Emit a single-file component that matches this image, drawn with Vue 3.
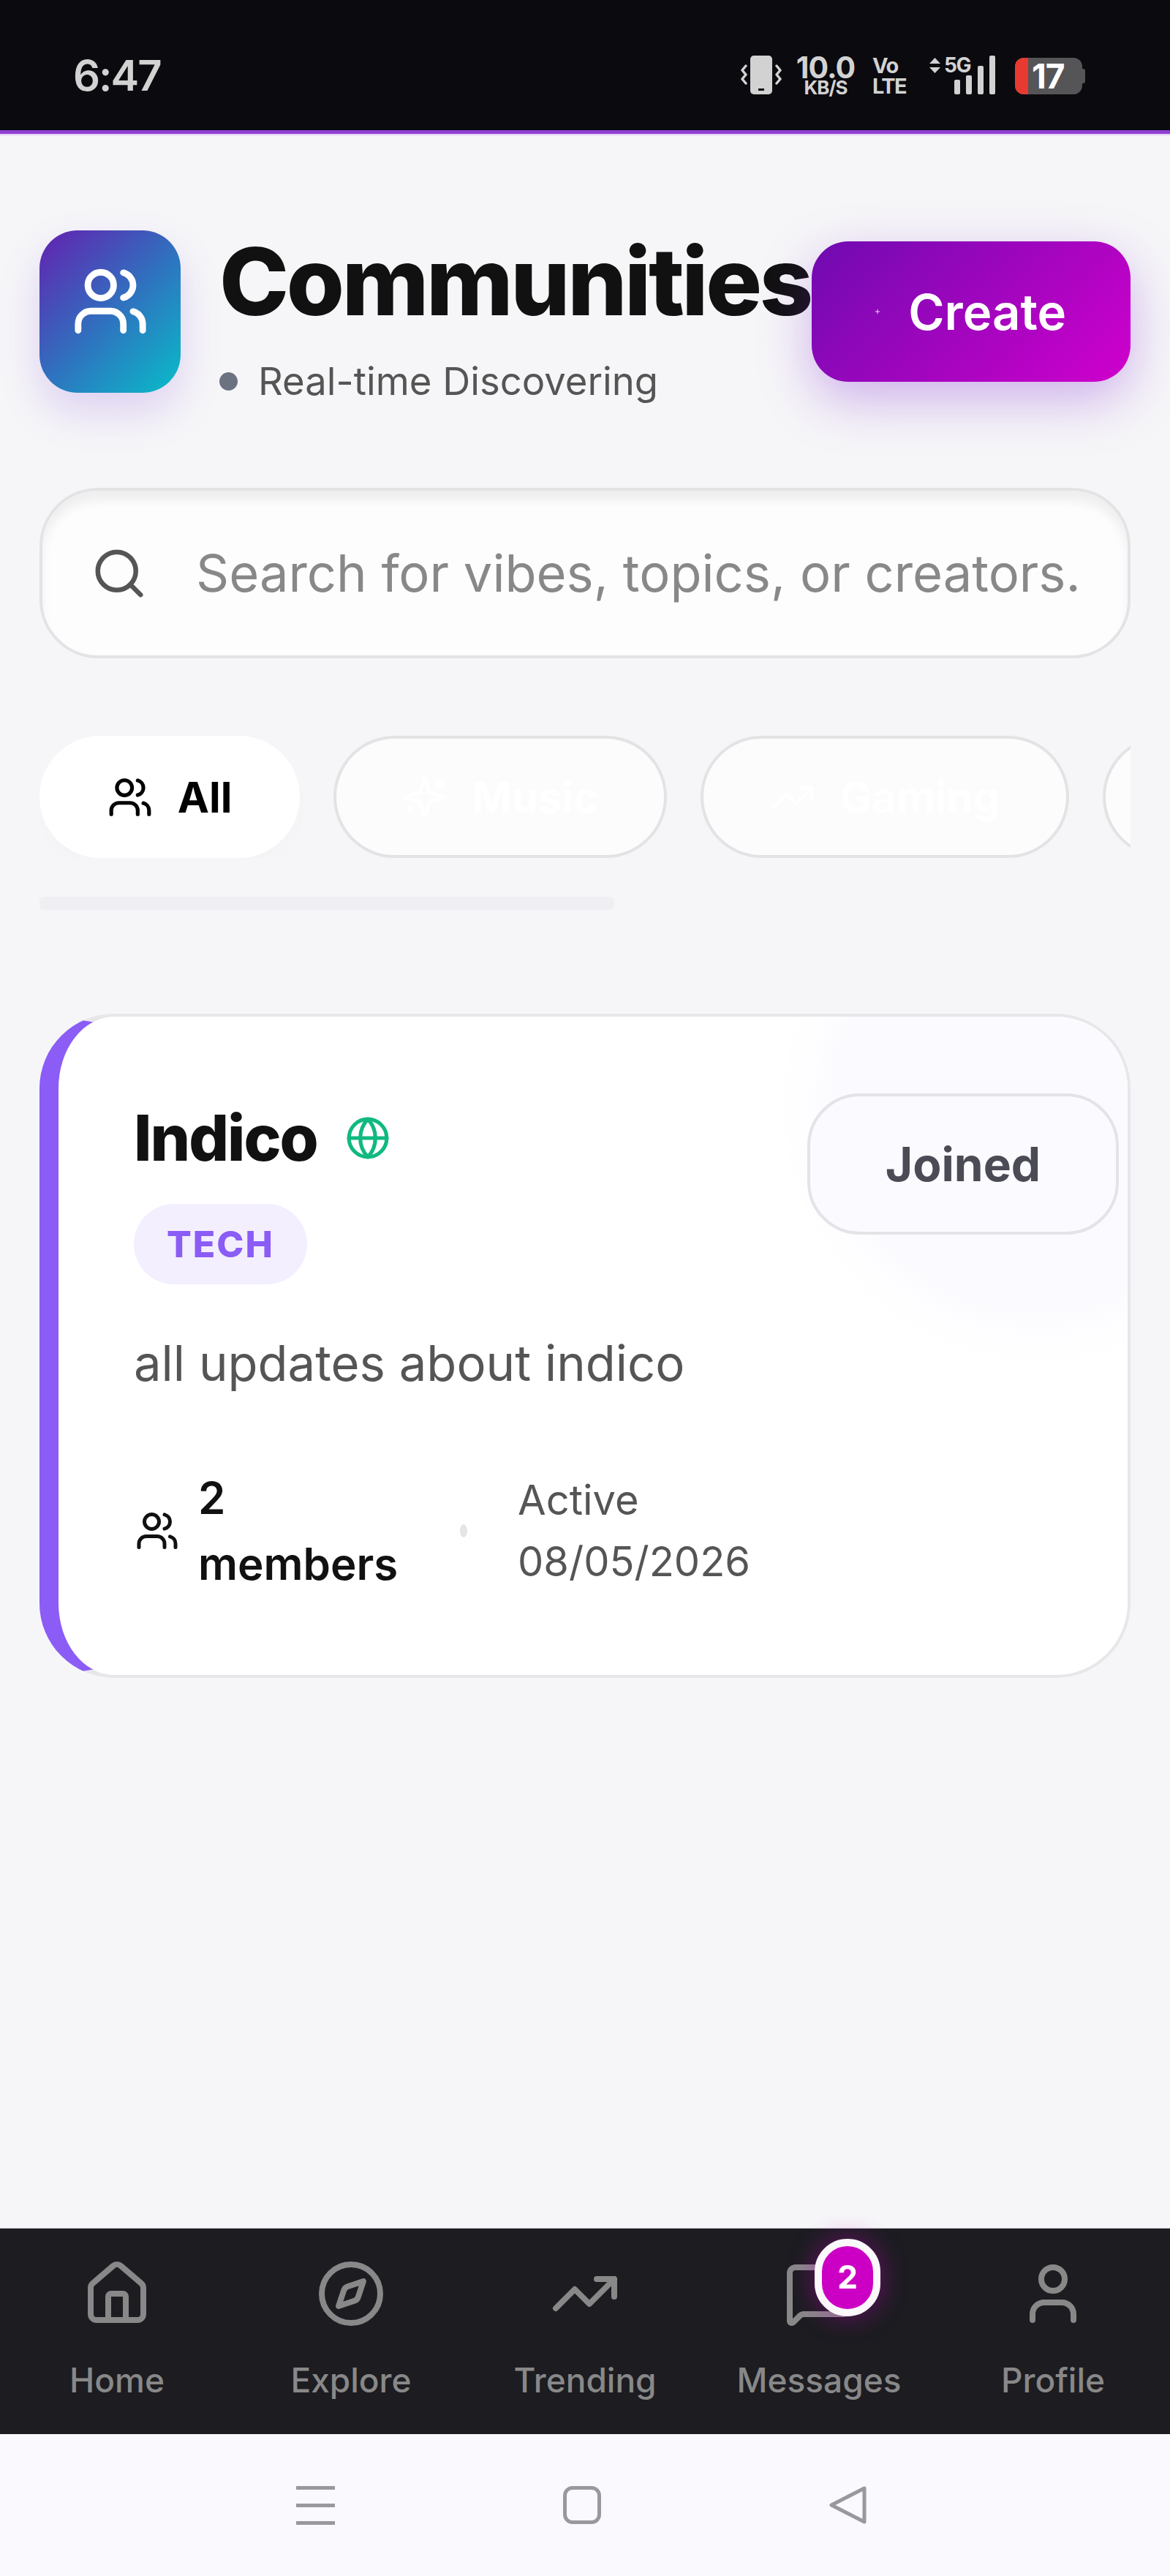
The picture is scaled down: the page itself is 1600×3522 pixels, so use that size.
<script setup>
const chips = [
  { label: "Music", icon: "music", width: 456 },
  { label: "Gaming", icon: "gaming", width: 504 }
]

const tabs = [
  { label: "Home", icon: "home" },
  { label: "Explore", icon: "compass" },
  { label: "Trending", icon: "trending" },
  { label: "Messages", icon: "messages", badge: 2 },
  { label: "Profile", icon: "user" }
]
</script>

<template>
  <div class="screen">
    <header class="status-bar">
      <span class="clock">6:47</span>

      <div class="status-icons">
        <svg class="vibrate" viewBox="0 0 56 54" fill="none">
          <rect x="13" y="0" width="30" height="53" rx="5" fill="#d2d2d2" />
          <rect x="24" y="45" width="8" height="3" fill="#0a0a0f" />
          <path d="M7 14 2 20l5 6-5 6 5 6M49 14l5 6-5 6 5 6-5 6" stroke="#d2d2d2" stroke-width="3.5" stroke-linecap="round" stroke-linejoin="round" />
        </svg>

        <div class="speed">
          <span class="speed-value">10.0</span>
          <span class="speed-unit">KB/S</span>
        </div>

        <div class="volte">
          <span>Vo</span>
          <span>LTE</span>
        </div>

        <div class="network">
          <div class="network-top">
            <svg class="arrows" viewBox="0 0 15 21">
              <path d="M7.5 0 15 8H0zM7.5 21 0 13h15z" fill="#d2d2d2" />
            </svg>
            <span>5G</span>
          </div>
        </div>

        <div class="signal">
          <i class="bar-1"></i>
          <i class="bar-2"></i>
          <i class="bar-3"></i>
          <i class="bar-4"></i>
        </div>

        <div class="battery">
          <div class="battery-level"></div>
          <span>17</span>
        </div>
      </div>
    </header>

    <main class="page">
      <section class="page-head">
        <div class="head-left">
          <div class="brand-icon">
            <svg viewBox="0 0 24 24" fill="none" stroke="#fff" stroke-width="2" stroke-linecap="round" stroke-linejoin="round">
              <path d="M16 21v-2a4 4 0 0 0-4-4H6a4 4 0 0 0-4 4v2" />
              <circle cx="9" cy="7" r="4" />
              <path d="M22 21v-2a4 4 0 0 0-3-3.87" />
              <path d="M16 3.13a4 4 0 0 1 0 7.75" />
            </svg>
          </div>

          <div class="head-copy">
            <h1>Communities</h1>
            <p><span class="live-dot"></span>Real-time Discovering</p>
          </div>
        </div>

        <button class="create-btn">
          <svg viewBox="0 0 10 10" stroke="#fff" stroke-width="1">
            <path d="M5 1v8M1 5h8" />
          </svg>
          Create
        </button>
      </section>

      <div class="search-box">
        <svg viewBox="0 0 24 24" fill="none" stroke="#555" stroke-width="2" stroke-linecap="round" stroke-linejoin="round">
          <circle cx="11" cy="11" r="8" />
          <path d="m21 21-4.3-4.3" />
        </svg>
        <span class="placeholder">Search for vibes, topics, or creators.</span>
      </div>

      <div class="chips">
        <button class="chip chip-active">
          <svg viewBox="0 0 24 24" fill="none" stroke="#000" stroke-width="2" stroke-linecap="round" stroke-linejoin="round">
            <path d="M16 21v-2a4 4 0 0 0-4-4H6a4 4 0 0 0-4 4v2" />
            <circle cx="9" cy="7" r="4" />
            <path d="M22 21v-2a4 4 0 0 0-3-3.87" />
            <path d="M16 3.13a4 4 0 0 1 0 7.75" />
          </svg>
          All
        </button>

        <button
            v-for="chip in chips"
            :key="chip.label"
            class="chip"
            :style="{ width: chip.width + 'px' }"
        >
          <svg viewBox="0 0 24 24" fill="none" stroke="#fff" stroke-width="2" stroke-linecap="round" stroke-linejoin="round">
            <template v-if="chip.icon === 'music'">
              <path d="M9.937 15.5A2 2 0 0 0 8.5 14.063l-6.135-1.582a.5.5 0 0 1 0-.962L8.5 9.936A2 2 0 0 0 9.937 8.5l1.582-6.135a.5.5 0 0 1 .963 0L14.063 8.5A2 2 0 0 0 15.5 9.937l6.135 1.581a.5.5 0 0 1 0 .964L15.5 14.063a2 2 0 0 0-1.437 1.437l-1.582 6.135a.5.5 0 0 1-.963 0z" />
              <path d="M20 3v4" />
              <path d="M22 5h-4" />
              <path d="M4 17v2" />
              <path d="M5 18H3" />
            </template>
            <template v-else>
              <path d="M22 7 13.5 15.5 8.5 10.5 2 17" />
              <path d="M16 7h6v6" />
            </template>
          </svg>
          {{ chip.label }}
        </button>

        <button class="chip chip-clipped"></button>
      </div>

      <div class="scroll-thumb"></div>

      <article class="card">
        <div class="card-glow"></div>

        <div class="card-top">
          <div>
            <div class="card-title">
              <h2>Indico</h2>
              <svg viewBox="0 0 24 24" fill="none" stroke="#10b981" stroke-width="2" stroke-linecap="round" stroke-linejoin="round">
                <circle cx="12" cy="12" r="10" />
                <path d="M12 2a14.5 14.5 0 0 0 0 20 14.5 14.5 0 0 0 0-20" />
                <path d="M2 12h20" />
              </svg>
            </div>
            <span class="tag">TECH</span>
          </div>

          <button class="joined-btn">Joined</button>
        </div>

        <p class="card-desc">all updates about indico</p>

        <div class="card-meta">
          <div class="members">
            <svg viewBox="0 0 24 24" fill="none" stroke="#111" stroke-width="2" stroke-linecap="round" stroke-linejoin="round">
              <path d="M16 21v-2a4 4 0 0 0-4-4H6a4 4 0 0 0-4 4v2" />
              <circle cx="9" cy="7" r="4" />
              <path d="M22 21v-2a4 4 0 0 0-3-3.87" />
              <path d="M16 3.13a4 4 0 0 1 0 7.75" />
            </svg>
            <span>2<br />members</span>
          </div>
          <span class="meta-dot"></span>
          <span class="active-date">Active<br />08/05/2026</span>
        </div>
      </article>
    </main>

    <nav class="tab-bar">
      <div v-for="tab in tabs" :key="tab.label" class="tab">
        <div class="tab-icon">
          <svg viewBox="0 0 24 24" fill="none" stroke="#888" stroke-width="2" stroke-linecap="round" stroke-linejoin="round">
            <template v-if="tab.icon === 'home'">
              <path d="M15 21v-8a1 1 0 0 0-1-1h-4a1 1 0 0 0-1 1v8" />
              <path d="M3 10a2 2 0 0 1 .709-1.528l7-5.999a2 2 0 0 1 2.582 0l7 5.999A2 2 0 0 1 21 10v9a2 2 0 0 1-2 2H5a2 2 0 0 1-2-2z" />
            </template>
            <template v-else-if="tab.icon === 'compass'">
              <circle cx="12" cy="12" r="10" />
              <path d="m16.24 7.76-1.804 5.411a2 2 0 0 1-1.265 1.265L7.76 16.24l1.804-5.411a2 2 0 0 1 1.265-1.265z" />
            </template>
            <template v-else-if="tab.icon === 'trending'">
              <path d="M22 7 13.5 15.5 8.5 10.5 2 17" />
              <path d="M16 7h6v6" />
            </template>
            <template v-else-if="tab.icon === 'messages'">
              <path d="M22 17a2 2 0 0 1-2 2H6.828a2 2 0 0 0-1.414.586l-2.202 2.202A.71.71 0 0 1 2 21.286V5a2 2 0 0 1 2-2h16a2 2 0 0 1 2 2z" />
            </template>
            <template v-else>
              <path d="M19 21v-2a4 4 0 0 0-4-4H9a4 4 0 0 0-4 4v2" />
              <circle cx="12" cy="7" r="4" />
            </template>
          </svg>
          <span v-if="tab.badge" class="badge">{{ tab.badge }}</span>
        </div>
        <span class="tab-label">{{ tab.label }}</span>
      </div>
    </nav>

    <footer class="system-bar">
      <div class="sys-menu"><i></i><i></i><i></i></div>
      <div class="sys-home"></div>
      <svg class="sys-back" viewBox="0 0 51 52" fill="none" stroke="#98989e" stroke-width="5" stroke-linejoin="round">
        <path d="M48 3v46L3 26z" />
      </svg>
    </footer>
  </div>
</template>

<style>
html,
body {
  margin: 0;
  background: #f6f6f8;
}
</style>

<style scoped>
.screen {
  width: 1600px;
  height: 3522px;
  display: flex;
  flex-direction: column;
  overflow: hidden;
  background: #f6f6f8;
  font-family: Inter, "Liberation Sans", sans-serif;
}

button {
  font-family: inherit;
  cursor: pointer;
}

/* status bar */
.status-bar {
  flex: none;
  box-sizing: border-box;
  height: 183px;
  display: flex;
  justify-content: space-between;
  padding: 76px 120px 0 100px;
  background: #0a0a0f;
  border-bottom: 5px solid #8f3fd0;
  box-shadow: 0 2px 1px #e4d2f5;
  color: #d2d2d2;
}

.clock {
  font-size: 58px;
  font-weight: 600;
  line-height: 54px;
  letter-spacing: -2px;
}

.status-icons {
  display: flex;
  align-items: flex-start;
  height: 54px;
}

.vibrate {
  width: 56px;
  height: 54px;
  margin-right: 19px;
}

.speed {
  display: flex;
  flex-direction: column;
  align-items: center;
  width: 82px;
  margin-right: 23px;
  font-weight: 700;
}

.speed-value {
  font-size: 41px;
  line-height: 33px;
  letter-spacing: -1px;
}

.speed-unit {
  font-size: 26px;
  line-height: 22px;
  letter-spacing: -1px;
}

.volte {
  display: flex;
  flex-direction: column;
  width: 50px;
  margin-right: 28px;
  font-size: 29px;
  font-weight: 700;
  line-height: 28px;
  letter-spacing: -1.5px;
}

.network-top {
  display: flex;
  gap: 5px;
  align-items: center;
  font-size: 28px;
  font-weight: 700;
  line-height: 26px;
  letter-spacing: -1.5px;
}

.arrows {
  width: 15px;
  height: 21px;
}

.network {
  width: 58px;
  margin-right: -24px;
}

.signal {
  display: flex;
  align-items: flex-end;
  gap: 8px;
  height: 53px;
  margin-right: 27px;
}

.signal i {
  width: 8px;
  border-radius: 2px;
  background: #d2d2d2;
}

.bar-1 { height: 20px; }
.bar-2 { height: 26px; }
.bar-3 { height: 39px; }
.bar-4 { height: 53px; }

.battery {
  position: relative;
  width: 92px;
  height: 50px;
  margin-top: 3px;
  border-radius: 12px;
  background: #555558;
  color: #fff;
  font-size: 46px;
  font-weight: 700;
  line-height: 50px;
}

.battery::after {
  content: "";
  position: absolute;
  top: 15px;
  right: -4px;
  width: 4px;
  height: 20px;
  border-radius: 0 3px 3px 0;
  background: #555558;
}

.battery-level {
  position: absolute;
  inset: 0 auto 0 0;
  width: 18px;
  border-radius: 12px 0 0 12px;
  background: #e83a30;
}

.battery span {
  position: absolute;
  left: 23px;
  top: 0;
  letter-spacing: -1px;
}

/* page */
.page {
  flex: 1;
  min-height: 0;
  padding: 132px 54px 0;
}

.page-head {
  display: flex;
  justify-content: space-between;
  align-items: flex-start;
  height: 222px;
}

.head-left {
  display: flex;
  gap: 53px;
  height: 100%;
}

.brand-icon {
  width: 193px;
  box-sizing: border-box;
  display: flex;
  align-items: center;
  justify-content: center;
  padding-bottom: 28px;
  border-radius: 52px;
  background: linear-gradient(135deg, #6420b0, #2f72bf 52%, #08bdc9);
  box-shadow: 0 26px 56px rgba(124, 60, 220, 0.2);
}

.brand-icon svg {
  width: 106px;
  height: 106px;
}

.head-copy {
  width: 806px;
}

h1 {
  margin: 0;
  color: #111;
  font-size: 128px;
  font-weight: 800;
  line-height: 140px;
  letter-spacing: -3.4px;
  white-space: nowrap;
}

.head-copy p {
  display: flex;
  align-items: center;
  gap: 28px;
  margin: 29px 0 0;
  color: #555;
  font-size: 52.6px;
  line-height: 74px;
}

.live-dot {
  width: 25px;
  height: 25px;
  border-radius: 50%;
  background: #6b7280;
}

.create-btn {
  display: flex;
  align-items: center;
  justify-content: flex-end;
  gap: 38px;
  box-sizing: border-box;
  width: 436px;
  height: 192px;
  margin-top: 15px;
  padding: 0 88px 0 0;
  border: 0;
  border-radius: 50px;
  background: linear-gradient(135deg, #6f0bb0, #d000cc);
  box-shadow: 0 24px 70px rgba(130, 40, 210, 0.34);
  color: #fff;
  font-size: 67px;
  font-weight: 600;
}

.create-btn svg {
  width: 8px;
  height: 8px;
}

.search-box {
  display: flex;
  align-items: center;
  gap: 66px;
  box-sizing: border-box;
  height: 233px;
  margin-top: 130px;
  padding: 0 0 0 66px;
  overflow: hidden;
  border: 4px solid #e3e3e6;
  border-radius: 80px;
  background: #fdfdfd;
  box-shadow: inset 0 14px 14px rgba(0, 0, 0, 0.06);
}

.search-box svg {
  flex: none;
  width: 78px;
  height: 78px;
}

.placeholder {
  color: #888;
  font-size: 70.4px;
  white-space: nowrap;
}

.chips {
  display: flex;
  gap: 46px;
  height: 167px;
  margin-top: 106px;
  overflow: hidden;
}

.chip {
  display: flex;
  flex: none;
  align-items: center;
  justify-content: center;
  gap: 34px;
  box-sizing: border-box;
  height: 167px;
  padding: 0;
  border: 4px solid #e3e3e6;
  border-radius: 84px;
  background: #fcfcfc;
  color: #fff;
  font-size: 58px;
  font-weight: 700;
}

.chip svg {
  width: 62px;
  height: 62px;
}

.chip-active {
  width: 356px;
  border-color: #fff;
  background: #fff;
  color: #000;
  box-shadow: 0 12px 24px rgba(0, 0, 0, 0.01);
}

.chip-clipped {
  width: 300px;
}

.scroll-thumb {
  width: 786px;
  height: 18px;
  margin-top: 53px;
  border-radius: 6px;
  background: #efeff3;
}

/* card */
.card {
  position: relative;
  box-sizing: border-box;
  height: 908px;
  margin-top: 142px;
  padding: 121px 12px 0 103px;
  overflow: hidden;
  border: 4px solid #e7e7ea;
  border-left: 26px solid #8b5cf6;
  border-radius: 102px;
  background: #fff;
}

.card-glow {
  position: absolute;
  top: -230px;
  right: -230px;
  width: 700px;
  height: 700px;
  border-radius: 50%;
  background: radial-gradient(circle, #fbfafe 0 56%, rgba(253, 252, 255, 0.6) 64%, rgba(255, 255, 255, 0) 74%);
}

.card-top {
  position: relative;
  display: flex;
  justify-content: space-between;
  align-items: flex-start;
}

.card-title {
  display: flex;
  align-items: center;
  gap: 38px;
  height: 90px;
}

.card-title svg {
  width: 62px;
  height: 62px;
}

h2 {
  margin: 0;
  color: #111;
  font-size: 86px;
  font-weight: 800;
  line-height: 90px;
  letter-spacing: -2px;
}

.tag {
  display: inline-block;
  margin-top: 45px;
  padding: 0 45px;
  border-radius: 55px;
  background: #f3effe;
  color: #8b5cf6;
  font-size: 50px;
  font-weight: 800;
  line-height: 110px;
  letter-spacing: 2px;
}

.joined-btn {
  width: 426px;
  height: 193px;
  margin-top: -16px;
  border: 4px solid #e3e3e8;
  border-radius: 72px;
  background: #fbfafe;
  color: #4b4b55;
  font-size: 64px;
  font-weight: 700;
}

.card-desc {
  position: relative;
  margin: 68px 0 0;
  color: #555;
  font-size: 67px;
  line-height: 80px;
}

.card-meta {
  position: relative;
  display: flex;
  align-items: center;
  margin-top: 99px;
}

.members {
  display: flex;
  align-items: center;
  gap: 26px;
  width: 446px;
  padding-left: 2px;
  box-sizing: border-box;
  color: #111;
  font-size: 60px;
  font-weight: 600;
  line-height: 90px;
}

.members svg {
  flex: none;
  width: 60px;
  height: 60px;
}

.meta-dot {
  width: 10px;
  height: 18px;
  border-radius: 50%;
  background: #e5e5e5;
}

.active-date {
  margin-left: 69px;
  color: #555;
  font-size: 56px;
  line-height: 84px;
}

/* bottom nav */
.tab-bar {
  position: relative;
  flex: none;
  display: flex;
  height: 281px;
  background: #1c1c21;
  box-shadow: 0 -1px 0 #c8c8cc;
}

.tab {
  display: flex;
  flex: 1;
  flex-direction: column;
  align-items: center;
  padding-top: 41px;
}

.tab-icon {
  position: relative;
  width: 96px;
  height: 96px;
}

.tab-icon svg {
  display: block;
  width: 96px;
  height: 96px;
}

.tab-label {
  margin-top: 42px;
  color: #888;
  font-size: 46px;
  font-weight: 500;
  line-height: 56px;
}

.badge {
  position: absolute;
  top: -27px;
  left: 42px;
  box-sizing: border-box;
  width: 90px;
  height: 106px;
  border: 10px solid #fbf8fb;
  border-radius: 45px;
  background: #cc00c4;
  box-shadow: 0 0 36px rgba(204, 0, 196, 0.45);
  color: #fff;
  font-size: 44px;
  font-weight: 700;
  line-height: 84px;
  text-align: center;
}

/* android nav */
.system-bar {
  flex: none;
  display: flex;
  align-items: center;
  gap: 312px;
  box-sizing: border-box;
  height: 194px;
  padding: 0 0 0 405px;
  background: #f9f9fe;
}

.sys-menu {
  display: flex;
  flex-direction: column;
  gap: 19px;
  width: 53px;
}

.sys-menu i {
  height: 5px;
  background: #98989e;
}

.sys-home {
  box-sizing: border-box;
  width: 52px;
  height: 52px;
  border: 5px solid #98989e;
  border-radius: 13px;
}

.sys-back {
  width: 51px;
  height: 52px;
}
</style>
